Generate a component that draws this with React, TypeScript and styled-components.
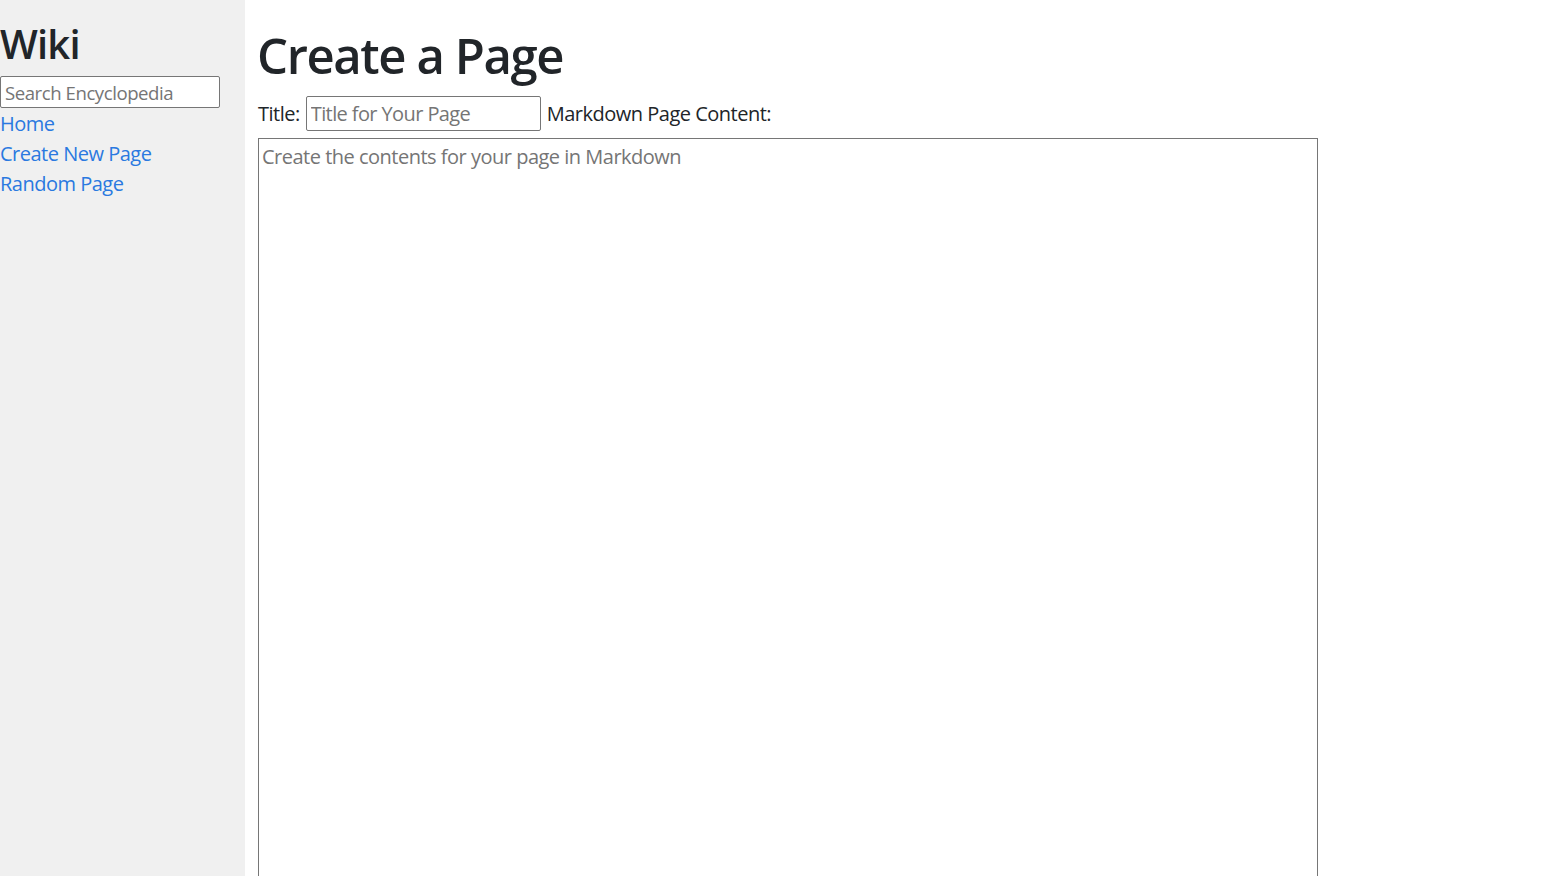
import React from "react";
import styled, { createGlobalStyle } from "styled-components";

const Global = createGlobalStyle`
  html, body { margin: 0; padding: 0; background: #fff; }
  body {
    font-family: "Open Sans", "Noto Sans", sans-serif;
    font-size: 20px;
    letter-spacing: -0.5px;
    line-height: 1.5;
    color: #212529;
    overflow: hidden;
  }
  * { box-sizing: border-box; }
`;

const Layout = styled.div`
  display: flex;
  min-height: 100vh;
`;

const Sidebar = styled.nav`
  width: 245px;
  flex: none;
  background: #f0f0f0;
  padding-top: 20px;
`;

const Brand = styled.h2`
  margin: 0 0 8px 0;
  font-size: 40px;
  font-weight: 600;
  letter-spacing: -0.8px;
  line-height: 1.2;
`;

const SearchInput = styled.input`
  display: block;
  width: 220px;
  height: 32px;
  margin: 0 0 1px 0;
  padding: 1px 4px;
  font-family: inherit;
  font-size: 18.6px;
  letter-spacing: -0.45px;
  color: #212529;
  border: 1px solid #767676;
  border-radius: 2px;
  background: #fff;
  &::placeholder { color: #757575; }
`;

const NavLink = styled.a`
  display: block;
  color: #2a79e0;
  text-decoration: none;
  line-height: 30px;
`;

const Main = styled.main`
  flex: 1;
  padding: 25px 0 0 13px;
`;

const Heading = styled.h1`
  margin: 0 0 11px -1px;
  font-size: 49px;
  font-weight: 600;
  letter-spacing: -1.4px;
  line-height: 60px;
`;

const FieldRow = styled.div`
  display: flex;
  align-items: center;
  gap: 6px;
  margin-bottom: 7px;
`;

const Label = styled.label`
  white-space: nowrap;
`;

const TitleInput = styled.input`
  width: 235px;
  height: 35px;
  margin: 0;
  padding: 1px 4px;
  font-family: inherit;
  font-size: 20px;
  letter-spacing: -0.6px;
  color: #212529;
  border: 1px solid #767676;
  border-radius: 2px;
  &::placeholder { color: #757575; }
`;

const ContentArea = styled.textarea`
  display: block;
  width: 1060px;
  height: 800px;
  margin: 0;
  padding: 5px 3px;
  font-family: inherit;
  font-size: 20px;
  letter-spacing: -0.5px;
  line-height: 26px;
  color: #212529;
  border: 1px solid #767676;
  border-radius: 0;
  resize: none;
  &::placeholder { color: #757575; }
`;

export default function App() {
  return (
    <>
      <Global />
      <Layout>
        <Sidebar>
          <Brand>Wiki</Brand>
          <form>
            <SearchInput type="text" placeholder="Search Encyclopedia" />
          </form>
          <div>
            <NavLink href="#">Home</NavLink>
          </div>
          <div>
            <NavLink href="#">Create New Page</NavLink>
          </div>
          <div>
            <NavLink href="#">Random Page</NavLink>
          </div>
        </Sidebar>
        <Main>
          <Heading>Create a Page</Heading>
          <form>
            <FieldRow>
              <Label htmlFor="title">Title:</Label>
              <TitleInput id="title" type="text" placeholder="Title for Your Page" />
              <Label htmlFor="content">Markdown Page Content:</Label>
            </FieldRow>
            <ContentArea id="content" placeholder="Create the contents for your page in Markdown" />
          </form>
        </Main>
      </Layout>
    </>
  );
}
